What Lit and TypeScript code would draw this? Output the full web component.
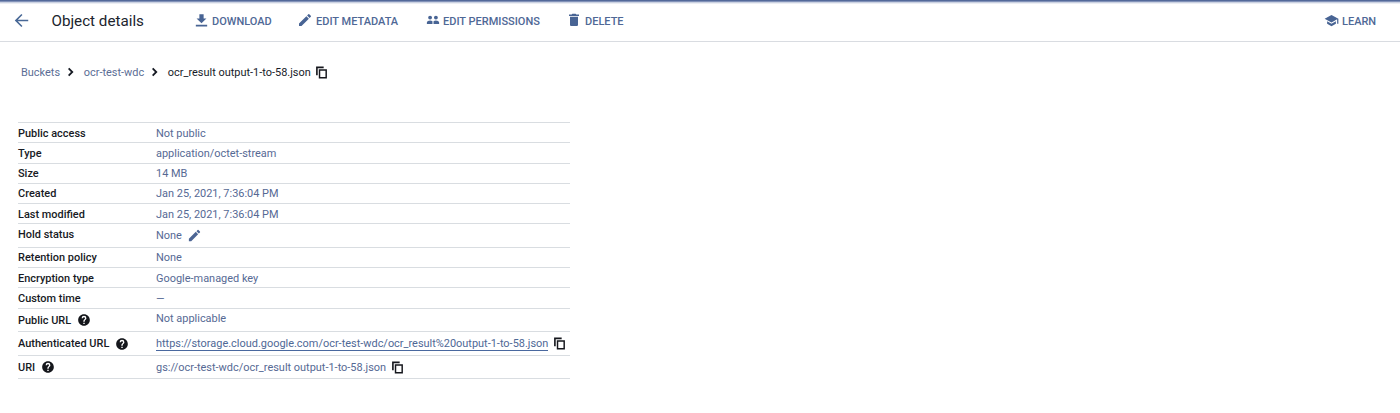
import { LitElement, html, css, svg, nothing } from "lit";
import { customElement } from "lit/decorators.js";

const paths: Record<string, string> = {
  back: "M20.500 11H7.300l5.900-5.900L11.800 3.700 3.500 12l8.300 8.300 1.400-1.400L7.300 13h13.200v-2z",
  download: "M19 9h-4V3H9v6H5l7 7 7-7zM4 18v2.300h16v-2.300H4z",
  edit: "M3 17.25V21h3.75L17.81 9.94l-3.75-3.75L3 17.25zM20.71 7.04a1 1 0 0 0 0-1.41l-2.34-2.34a1 1 0 0 0-1.41 0l-1.83 1.83 3.75 3.75 1.83-1.83z",
  people: "M7 4.500a3.300 3.300 0 1 0 0 6.600 3.300 3.300 0 0 0 0-6.600zM17 4.500a3.300 3.300 0 1 0 0 6.600 3.300 3.300 0 0 0 0-6.600zM1.500 19v-2.800c0-2.200 3-3.400 5.500-3.400 1.700 0 3 .4 4.100 1.200V19zM12.900 19v-5c1.100-.8 2.400-1.200 4.100-1.200 2.500 0 5.500 1.200 5.500 3.400V19z",
  trash: "M6 19c0 1.100.9 2 2 2h8c1.100 0 2-.9 2-2V7.200H6V19zM19.500 3.800h-4l-1-1h-5l-1 1h-4V6h15V3.800z",
  learn: "M5 13.180v4L12 21l7-3.820v-4L12 17l-7-3.820zM12 3L1 9l11 6 9-4.910V17h2V9L12 3z",
  chevron: "M8.600 3.500L6 6.100l5.900 5.900L6 17.900l2.600 2.600L17.100 12z",
  copy: "M16 1H2v16h3V4h11V1zM22 6H7v17h15V6zM19.300 20.300H9.700V8.700h9.600v11.600z",
  help: "M12 2C6.480 2 2 6.480 2 12s4.480 10 10 10 10-4.480 10-10S17.520 2 12 2zm1.200 17h-2.400v-2.300h2.400V19zm2-7.700l-.9.900c-.7.700-1.100 1.300-1.100 2.800h-2.400v-.5c0-1.100.4-2.100 1.100-2.800l1.200-1.300c.4-.3.6-.8.6-1.400a1.700 1.700 0 0 0-3.400 0H7.900a4.100 4.100 0 0 1 8.200 0c0 .9-.3 1.700-.9 2.300z",
};

const icon = (name: string, cls = name) => html`<svg class="icon ${cls}" viewBox="0 0 24 24" aria-hidden="true">${svg`<path d=${paths[name]}></path>`}</svg>`;

interface Row {
  label: string;
  value: string;
  size?: string;
  help?: boolean;
  after?: string;
  link?: boolean;
}

const rows: Row[] = [
  { label: "Public access", value: "Not public" },
  { label: "Type", value: "application/octet-stream", size: "h21" },
  { label: "Size", value: "14 MB", size: "tight" },
  { label: "Created", value: "Jan 25, 2021, 7:36:04 PM", size: "tight" },
  { label: "Last modified", value: "Jan 25, 2021, 7:36:04 PM" },
  { label: "Hold status", value: "None", after: "edit", size: "hold" },
  { label: "Retention policy", value: "None", size: "tight" },
  { label: "Encryption type", value: "Google-managed key" },
  { label: "Custom time", value: "—", size: "h21" },
  { label: "Public URL", value: "Not applicable", help: true, size: "public" },
  { label: "Authenticated URL", value: "https://storage.cloud.google.com/ocr-test-wdc/ocr_result%20output-1-to-58.json", help: true, after: "copy", link: true, size: "h24" },
  { label: "URI", value: "gs://ocr-test-wdc/ocr_result output-1-to-58.json", help: true, after: "copy", size: "h23" },
];

@customElement("app-root")
export class AppRoot extends LitElement {
  static styles = css`
    :host {
      display: block;
      height: 413px;
      overflow: hidden;
      background: #fff;
      font-family: Roboto, "Liberation Sans", sans-serif;
      font-size: 10.95px;
      color: #566994;
      white-space: nowrap;
    }
    .icon { display: block; flex: none; fill: currentColor; width: 16px; height: 16px; }
    .strip { height: 4px; background: linear-gradient(#53699a 0 1px, #8292b8 1px 2px, #cbd2e2 2px 3px, #eceef3 3px); }
    .bar {
      box-sizing: border-box;
      height: 38px;
      display: grid;
      grid-template-columns: 39.5px 141.5px 104px 127px 142px 1fr 77px;
      align-items: center;
      padding: 0 0 3px 12px;
      border-bottom: 1px solid #d9dce1;
    }
    .title { font-size: 15.2px; color: #20242d; }
    .back { width: 19px; height: 19px; margin-bottom: 2px; color: #486896; }
    .action { display: flex; align-items: center; font-size: 11px; font-weight: 500; color: #4f6896; }
    .action .icon { color: #486494; margin: 0 3px 2px 0; }
    .action .download { width: 17px; height: 17px; margin-right: 2px; }
    .action .edit { width: 16px; margin-right: 3px; }
    .action .people { width: 14px; height: 14px; margin: 0 3px 2px 2px; }
    .action .learn { width: 15px; height: 15px; margin: 0 3px 2px 1px; }
    .crumbs { display: flex; align-items: center; height: 20px; padding: 20px 0 0 21px; color: #5b6d95; }
    .chevron { width: 12px; height: 12px; margin: 0 6.700px 0 5px; color: #171b24; }
    .current { color: #171b29; }
    .copy { width: 13px; height: 13px; color: #15171d; margin-left: 4.500px; }
    .details { width: 552px; margin: 40px 0 0 18px; border-top: 1px solid #d9dde1; }
    .row {
      box-sizing: border-box;
      display: grid;
      grid-template-columns: 138px 1fr;
      align-items: center;
      height: 20px;
      padding-top: 1px;
      border-bottom: 1px solid #d9dde1;
    }
    .tight { padding-top: 0; }
    .h21 { height: 21px; padding-top: 0; }
    .h23 { height: 23px; padding-top: 0; }
    .h24, .hold { height: 24px; padding-top: 0; }
    .public { height: 23px; padding-top: 0; }
    .hold .label { padding-bottom: 3px; }
    .public .value { padding-bottom: 3px; }
    .label, .value { display: flex; align-items: center; }
    .label { font-weight: 500; color: #171a24; }
    .help { width: 14px; height: 14px; margin-left: 5.500px; color: #15171c; }
    .value .edit { width: 15px; height: 15px; margin-left: 5px; color: #4c6594; }
    .link { border-bottom: 1px solid #49689f; line-height: 13px; color: #4f6896; }
  `;

  render() {
    return html`
      <div class="strip"></div>
      <header class="bar">
        ${icon("back")}
        <div class="title">Object details</div>
        <div class="action">${icon("download")}<span>DOWNLOAD</span></div>
        <div class="action">${icon("edit")}<span>EDIT METADATA</span></div>
        <div class="action">${icon("people")}<span>EDIT PERMISSIONS</span></div>
        <div class="action">${icon("trash")}<span>DELETE</span></div>
        <div class="action">${icon("learn")}<span>LEARN</span></div>
      </header>
      <nav class="crumbs">
        <span>Buckets</span>${icon("chevron")}
        <span>ocr-test-wdc</span>${icon("chevron")}
        <span class="current">ocr_result output-1-to-58.json</span>${icon("copy")}
      </nav>
      <section class="details">
        ${rows.map((r) => html`
          <div class="row ${r.size ?? ""}">
            <div class="label"><span>${r.label}</span>${r.help ? icon("help") : nothing}</div>
            <div class="value"><span class=${r.link ? "link" : "text"}>${r.value}</span>${r.after ? icon(r.after) : nothing}</div>
          </div>`)}
      </section>
    `;
  }
}
